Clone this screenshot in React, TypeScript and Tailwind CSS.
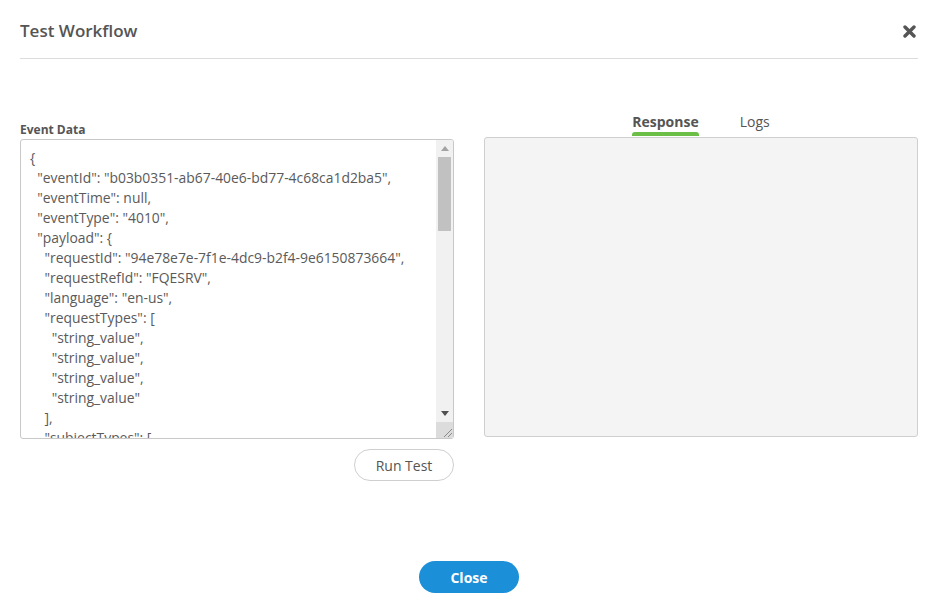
import React from "react";

const lines = [
  "{",
  '  "eventId": "b03b0351-ab67-40e6-bd77-4c68ca1d2ba5",',
  '  "eventTime": null,',
  '  "eventType": "4010",',
  '  "payload": {',
  '    "requestId": "94e78e7e-7f1e-4dc9-b2f4-9e6150873664",',
  '    "requestRefId": "FQESRV",',
  '    "language": "en-us",',
  '    "requestTypes": [',
  '      "string_value",',
  '      "string_value",',
  '      "string_value",',
  '      "string_value"',
  "    ],",
  '    "subjectTypes": [',
];

export default function App() {
  return (
    <div
      className="w-[935px] h-[612px] bg-white pl-5 pr-[17px] text-[#555]"
      style={{ fontFamily: '"Open Sans", sans-serif' }}
    >
      <div className="flex items-center justify-between pt-5 pb-4 border-b border-[#dcdcdc]">
        <h1 className="text-[17px] leading-[22px] font-semibold text-[#555]">Test Workflow</h1>
        <svg width="13" height="13" viewBox="0 0 13 13" className="mr-[2px]">
          <path d="M2 2 L11 11 M11 2 L2 11" stroke="#555" strokeWidth="3.4" strokeLinecap="round" />
        </svg>
      </div>

      <div className="grid grid-cols-2 gap-[30px] items-start">
        <div className="mt-[62px] flex flex-col">
          <div className="text-[12px] leading-[17px] font-bold mb-[1px]">Event Data</div>
          <div className="h-[300px] border border-[#c8c8c8] rounded-[3px] flex overflow-hidden bg-white">
            <div className="flex-1 overflow-hidden pl-[9px] pt-[8px]">
              <pre
                className="text-[13.9px] leading-[20px] text-[#5a5a5a] whitespace-pre"
                style={{ fontFamily: '"Open Sans", sans-serif' }}
              >
                {lines.join("\n")}
              </pre>
            </div>
            <div className="w-[17px] bg-[#f1f1f1] flex flex-col">
              <div className="h-[17px] flex items-center justify-center">
                <svg width="8" height="5" viewBox="0 0 8 5">
                  <path d="M0 5 L4 0 L8 5 Z" fill="#a3a3a3" />
                </svg>
              </div>
              <div className="mx-[2px] h-[74px] bg-[#c1c1c1]" />
              <div className="flex-1" />
              <div className="h-[17px] flex items-center justify-center">
                <svg width="8" height="5" viewBox="0 0 8 5">
                  <path d="M0 0 L8 0 L4 5 Z" fill="#505050" />
                </svg>
              </div>
              <div className="h-[16px] bg-[#dcdcdc] flex items-end justify-end">
                <svg width="12" height="12" viewBox="0 0 12 12">
                  <path d="M11 3 L3 11 M11 7 L7 11" stroke="#8a8a8a" strokeWidth="1" />
                </svg>
              </div>
            </div>
          </div>
          <div className="flex justify-end mt-[10px]">
            <button className="w-[100px] h-[32px] rounded-full border border-[#cfcfcf] bg-white text-[14px] text-[#555]">
              Run Test
            </button>
          </div>
        </div>

        <div className="mt-[53px] flex flex-col">
          <div className="flex justify-center gap-[41px]">
            <div className="flex flex-col items-center">
              <span className="text-[14px] leading-[19px] font-bold text-[#555]">Response</span>
              <div className="mt-[1px] h-[4px] w-full rounded-t-[3px] bg-[#6cbf46]" />
            </div>
            <div className="flex flex-col items-center">
              <span className="text-[14px] leading-[19px] text-[#555]">Logs</span>
              <div className="mt-[1px] h-[4px]" />
            </div>
          </div>
          <div className="mt-[1px] h-[300px] bg-[#f4f4f4] border border-[#cfcfcf] rounded-[3px]" />
        </div>
      </div>

      <div className="flex justify-center mt-[80px]">
        <button className="w-[100px] h-[32px] rounded-full bg-[#1b8fd8] text-white text-[14px] font-bold">
          Close
        </button>
      </div>
    </div>
  );
}
